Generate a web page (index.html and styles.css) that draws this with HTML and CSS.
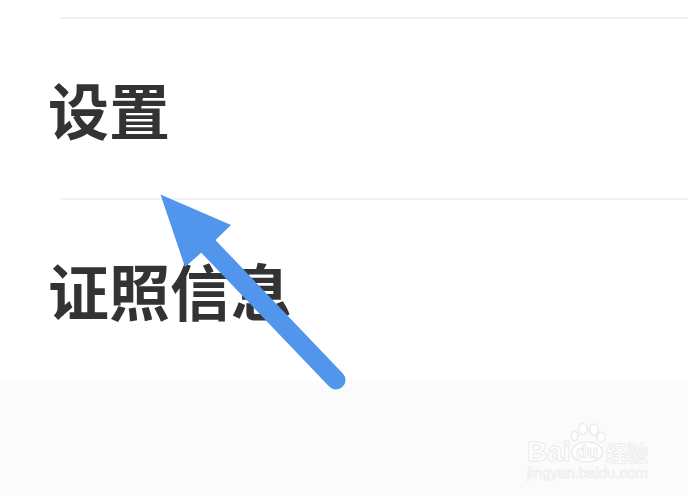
FILE: index.html
```html
<!DOCTYPE html>
<html lang="zh">
<head>
<meta charset="utf-8">
<title>设置</title>
<link rel="stylesheet" href="styles.css">
</head>
<body>
<div class="page">
  <div class="list">
    <div class="row">设置</div>
    <div class="row">证照信息</div>
  </div>
  <div class="footer"></div>
  <svg class="arrow" width="688" height="496" viewBox="0 0 688 496">
    <path class="arrow-shaft" d="M208 246L336 380"/>
    <path class="arrow-head" d="M160.5 194.5L231 225L215 240.5L201.500 252.500L185 267Z"/>
  </svg>
  <div class="mark">
    <div class="mark-top">
      <span class="mark-bai">Bai</span>
      <svg class="mark-paw" width="36" height="46" viewBox="0 0 36 46">
        <g class="mark-shape">
          <ellipse cx="4.500" cy="19" rx="3.500" ry="4.500"/>
          <ellipse cx="13" cy="12" rx="4.500" ry="5.500"/>
          <ellipse cx="24" cy="12.500" rx="4.500" ry="5.500"/>
          <ellipse cx="31" cy="20" rx="4" ry="5"/>
          <ellipse cx="17" cy="35" rx="15.500" ry="10"/>
        </g>
        <text class="mark-du" x="17" y="40.500" text-anchor="middle">du</text>
      </svg>
      <span class="mark-jy">经验</span>
    </div>
    <div class="mark-url">jingyan.baidu.com</div>
  </div>
</div>
</body>
</html>
```

FILE: styles.css
```css
* { box-sizing: border-box; }
html, body { margin: 0; padding: 0; background: #ffffff; }
.page {
  position: relative;
  width: 688px;
  height: 496px;
  overflow: hidden;
  display: flex;
  flex-direction: column;
  font-family: "Noto Sans CJK SC", "Liberation Sans", sans-serif;
}
.list { padding-top: 17px; height: 381px; flex: none; }
.row {
  height: 181px;
  padding-left: 48px;
  font-size: 61px;
  font-weight: 700;
  line-height: 60px;
  padding-top: 62px;
  color: #333333;
  position: relative;
}
.row::before {
  content: "";
  position: absolute;
  left: 60px;
  right: 0;
  top: 0;
  height: 2px;
  background: #f2f2f2;
}
.footer { flex: 1; background: #fbfbfb; }
.arrow { position: absolute; left: 0; top: 0; }
.arrow-shaft { stroke: #5295ec; stroke-width: 19; stroke-linecap: round; fill: none; }
.arrow-head { fill: #5295ec; }
.mark {
  position: absolute;
  left: 527px;
  top: 420px;
  width: 124px;
  color: #ffffff;
  font-family: "Liberation Sans", "Noto Sans CJK SC", sans-serif;
}
.mark-top { display: flex; align-items: flex-end; height: 43px; }
.mark-bai {
  font-size: 28px;
  font-weight: 700;
  line-height: 22px;
  width: 43px;
  -webkit-text-stroke: 1px #ebebeb;
}
.mark-paw { flex: none; margin-left: 0; }
.mark-shape { fill: #ffffff; stroke: #ebebeb; stroke-width: 1.5; }
.mark-du { font-size: 18px; font-weight: 700; fill: #ffffff; stroke: #ebebeb; stroke-width: 1; font-family: "Liberation Sans", sans-serif; }
.mark-jy {
  font-family: "Noto Sans CJK SC", sans-serif;
  font-size: 21px;
  font-weight: 700;
  line-height: 22px;
  white-space: nowrap;
  -webkit-text-stroke: 0.8px #ebebeb;
}
.mark-url {
  font-size: 15px;
  line-height: 18px;
  margin-top: 1px;
  white-space: nowrap;
  -webkit-text-stroke: 0.7px #ebebeb;
}
```
